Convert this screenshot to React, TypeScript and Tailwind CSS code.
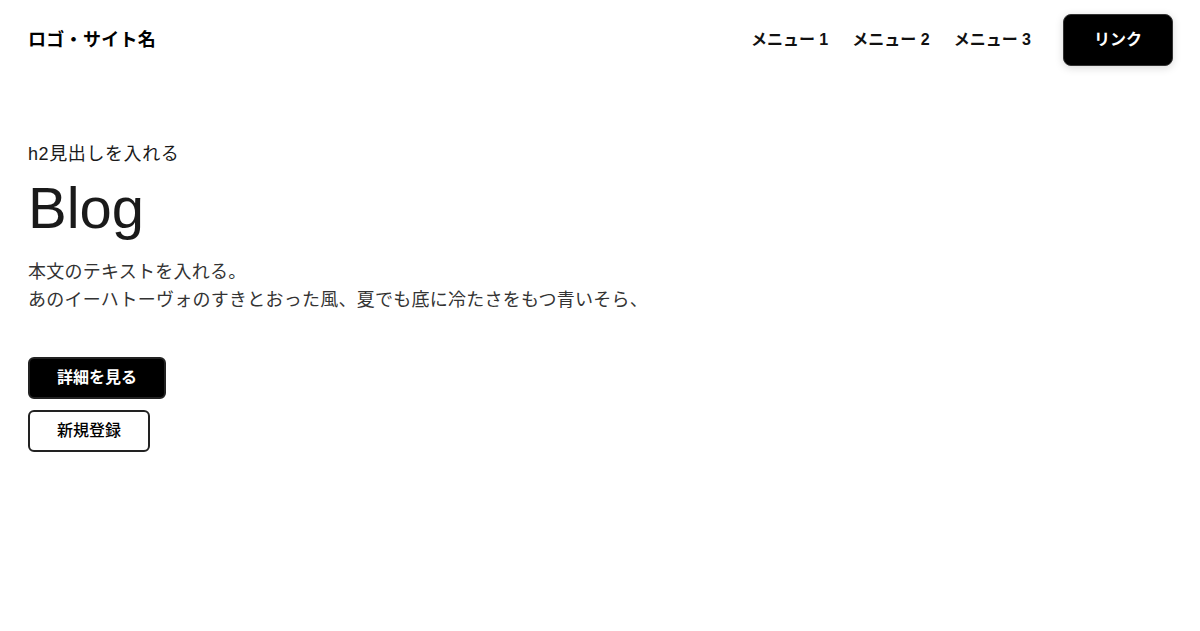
const font = 'font-["Liberation_Sans","Noto_Sans_CJK_JP",sans-serif]';

const menus = ['メニュー 1', 'メニュー 2', 'メニュー 3'];

export default function App() {
  return (
    <div className={`min-h-screen bg-white text-black ${font}`}>
      <header className="flex h-20 items-center justify-between pl-7 pr-[27px]">
        <h1 className="text-[18px] font-bold leading-7 tracking-[0.3px]">ロゴ・サイト名</h1>
        <nav className="flex items-center">
          <ul className="flex items-center gap-6">
            {menus.map((m) => (
              <li key={m}>
                <a href="#" className="text-base font-bold leading-6 text-[#111]">
                  {m}
                </a>
              </li>
            ))}
          </ul>
          <a
            href="#"
            className="ml-8 rounded-lg border border-[#333] bg-black px-[30px] py-[13px] text-base font-bold leading-6 text-white shadow-[0_2px_8px_rgba(0,0,0,0.15)]"
          >
            リンク
          </a>
        </nav>
      </header>

      <main className="px-7 pt-[61px]">
        <p className="text-[18px] leading-[27px] tracking-[0.6px] text-[#1a1a1a]">h2見出しを入れる</p>
        <h2 className="mt-[5px] text-[58px] leading-[70px] text-[#1a1a1a]">Blog</h2>
        <p className="mt-[15px] text-[18px] leading-[28px] tracking-[0.25px] text-[#333]">
          本文のテキストを入れる。
          <br />
          あのイーハトーヴォのすきとおった風、夏でも底に冷たさをもつ青いそら、
        </p>
        <div className="mt-[43px] flex flex-col items-start gap-[11px]">
          <a
            href="#"
            className="rounded-md border-2 border-[#222] bg-black px-[27px] py-[7px] text-base font-bold leading-6 text-white"
          >
            詳細を見る
          </a>
          <a
            href="#"
            className="rounded-md border-2 border-[#222] bg-white px-[27px] py-[7px] text-base font-medium leading-6 text-black"
          >
            新規登録
          </a>
        </div>
      </main>
    </div>
  );
}
